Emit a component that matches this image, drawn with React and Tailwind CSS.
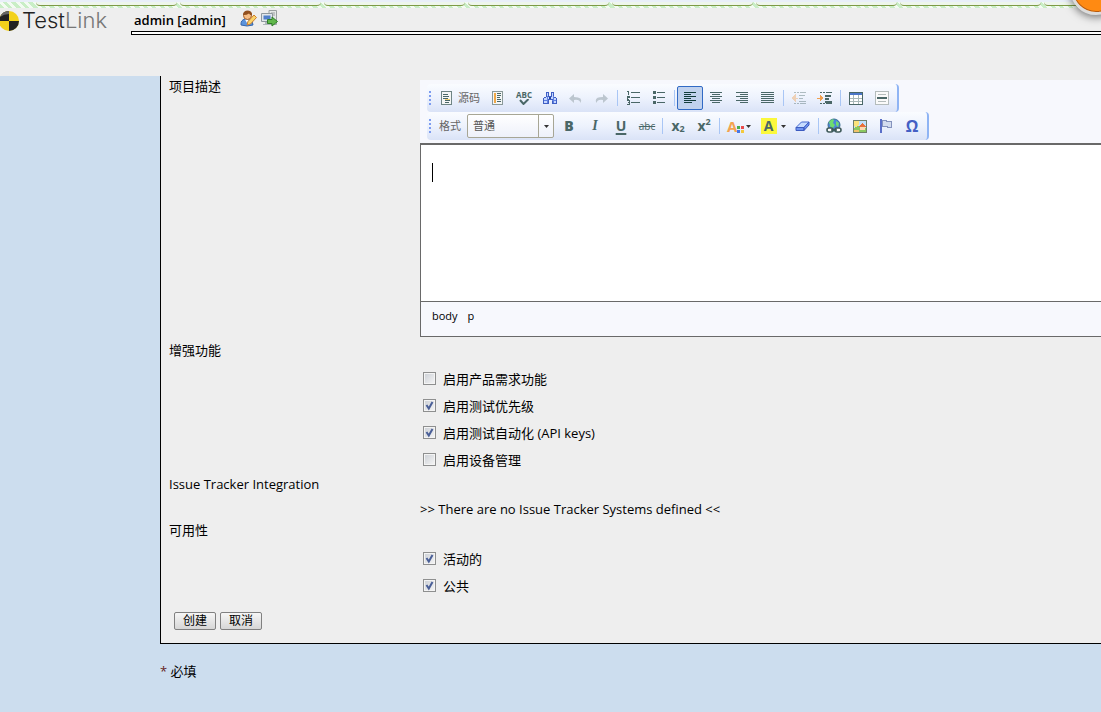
import { useState } from 'react';

const INK = '#4a6767';

const Icon = ({ children }) => (
  <svg width="16" height="16" viewBox="0 0 16 16" fill="none" shapeRendering="crispEdges" aria-hidden="true">
    {children}
  </svg>
);

// paragraph alignment icons, one [x, width] pair per line
const Lines = ({ rows, color = INK }) => (
  <Icon>
    {rows.map(([x, w], i) => (
      <rect key={i} x={x} y={2 + i * 2} width={w} height="1" fill={color} />
    ))}
  </Icon>
);

const leftRows = [[2, 12], [2, 7], [2, 12], [2, 7], [2, 12], [2, 8]];
const centerRows = [[2, 12], [4, 8], [2, 12], [4, 8], [2, 12], [4, 8]];
const rightRows = [[2, 12], [6, 8], [2, 12], [6, 8], [2, 12], [6, 8]];
const justifyRows = [[1, 13], [1, 13], [1, 13], [1, 13], [1, 13], [1, 13]];

const SourceIcon = () => (
  <Icon>
    <path d="M3.5 1.5h10v13h-10z" fill="#f4f6f6" stroke="#6f8585" />
    <path d="M5 4.5h5M5 6.5h6M5 8.5h5M7 10.5h5M7 12.5h4" stroke={INK} />
    <path d="M7 9.5h5" stroke="#f0d070" />
  </Icon>
);

const TemplateIcon = () => (
  <Icon>
    <path d="M2.5 1.500h10v13h-10z" fill="#f4f6f6" stroke="#8a9999" />
    <path d="M4.5 3v10" stroke="#f0a848" strokeWidth="2" />
    <path d="M7 3.500h4M7 5.500h4M7 7.500h3M7 9.500h4M7 11.500h4" stroke={INK} />
  </Icon>
);

const FindIcon = () => (
  <Icon>
    <path d="M4.500 2.500h2v4h3v-4h2v4l3 2v5h-4.500v-4h-4v4H1.500v-5l3-2z" fill="#c5d6ff" stroke="#3f5fc4" />
    <path d="M5 6v7M11 6v7M2 10.500h4M10 10.500h4" stroke="#5f80e0" />
    <path d="M7 7.500h2" stroke="#27459c" strokeWidth="2" />
  </Icon>
);

const UndoIcon = () => (
  <svg width="16" height="16" viewBox="0 0 16 16" aria-hidden="true">
    <path d="M6 4 1 8.500 6 13v-3q5.500-1 6.500 3 3-6-6.500-6z" fill="#bcc6cf" />
  </svg>
);

const RedoIcon = () => (
  <svg width="16" height="16" viewBox="0 0 16 16" aria-hidden="true">
    <path d="m9 4 5 4.500L9 13v-3q-5.500-1-6.500 3-3-6 6.500-6z" fill="#bcc6cf" />
  </svg>
);

const NumberedIcon = () => (
  <Icon>
    <path d="M2 1.500h1.500V5M2 6.500h2v1H2.500V9H4M2 10.500h2V12H2.500M4 12v2H2" stroke={INK} />
    <path d="M6 2.500h9M6 7.500h9M6 12.500h9" stroke={INK} />
  </Icon>
);

const BulletIcon = () => (
  <Icon>
    <path d="M2 2.500h3M2 7.500h3M2 12.500h3" stroke={INK} strokeWidth="3" />
    <path d="M6 2.500h8M6 7.500h8M6 12.500h8" stroke={INK} />
  </Icon>
);

const IndentIcon = ({ back }) => (
  <Icon>
    <g opacity={back ? 0.4 : 1}>
      <path d="M3 2.500h2M6 2.500h2M9 2.500h6M3 13.500h2M6 13.500h2M9 13.500h6" stroke={INK} />
      <path d="M8 5.500h6M8 8.500h4M8 11.500h7" stroke={INK} strokeWidth={back ? 1 : 2} />
      {back ? (
        <path d="M7 8H3M4 5 1 8l3 3z" stroke="#f0a050" fill="#f0a050" />
      ) : (
        <path d="M0 8h4M3 5l3 3-3 3z" stroke="#f0a050" fill="#f0a050" />
      )}
    </g>
  </Icon>
);

const TableIcon = () => (
  <Icon>
    <path d="M1.500 2.500h13v12h-13z" fill="#fff" />
    <path d="M2 4h12" stroke="#4b76c8" strokeWidth="2" />
    <path d="M2 8.500h12M2 11.500h12M5.500 5v9M10.500 5v9" stroke="#a9b8b8" />
    <path d="M1.500 2.500h13v12h-13z" stroke={INK} />
  </Icon>
);

const RuleIcon = () => (
  <Icon>
    <path d="M1.500 1.500h13v13h-13z" fill="#fafafa" stroke="#b4bcbc" />
    <path d="M4 4.500h8M4 11.500h8" stroke="#b4bcbc" />
    <path d="M3 8h10" stroke={INK} strokeWidth="2" />
  </Icon>
);

const TextColorIcon = () => (
  <span className="relative h-4 w-[18px] text-left text-[15px] leading-4 text-[#f4a350]">
    A
    <svg width="8" height="8" viewBox="0 0 8 8" className="absolute right-0 bottom-0" aria-hidden="true">
      <path d="M0 0h3v3H0z" fill="#4cae4c" />
      <path d="M4 0h3v3H4z" fill="#e94b4b" />
      <path d="M0 4h3v3H0z" fill="#4678e8" />
      <path d="M4 4h3v3H4z" fill="#f3c93c" />
    </svg>
  </span>
);

const EraserIcon = () => (
  <svg width="16" height="16" viewBox="0 0 16 16" aria-hidden="true">
    <path d="M6.500 4h7.500l-5 5.500h-8z" fill="#c7dcff" stroke="#4668cf" />
    <path d="M1 9.500h8v3H1zM9 9.500l5-5.500v3l-5 5.500z" fill="#6f94ef" stroke="#3c5bc0" />
  </svg>
);

const LinkIcon = () => (
  <svg width="16" height="16" viewBox="0 0 16 16" fill="none" aria-hidden="true">
    <circle cx="8" cy="7" r="6" fill="#4b86dc" stroke="#3b6f8f" />
    <path d="M3 4q3-4 5-2L7 5l2 2-2 3q-3 0-3-3zM10 3l3 2-1 4-2-2z" fill="#6fdc70" />
    <rect x="1" y="10" width="6" height="4" rx="2" fill="#fff" stroke="#3f5a5a" strokeWidth="1.600" />
    <rect x="9" y="10" width="6" height="4" rx="2" fill="#fff" stroke="#3f5a5a" strokeWidth="1.600" />
    <path d="M5 12h6" stroke="#3f5a5a" strokeWidth="1.600" />
  </svg>
);

const ImageIcon = () => (
  <Icon>
    <path d="M1.500 2.500h13v12h-13z" fill="#bfe0fb" stroke="#6f7f6a" />
    <path d="M2 3h5v4l-3 2-2-1z" fill="#fbe27a" />
    <path d="M2 10l4-2 8 2v4H2z" fill="#8ac860" />
    <path d="m7 8 3-3 4 3v1H7z" fill="#e8703a" />
    <path d="M8 9h5v3H8z" fill="#fbd9b0" />
    <path d="M2 12h5v2H2z" fill="#f0c36a" />
  </Icon>
);

const FlagIcon = () => (
  <Icon>
    <path d="M4 2.500h4v1h5.500v6H9v-1H4z" fill="#d3dcee" stroke="#8593bd" />
    <path d="M3 1v14" stroke="#5a6fc8" strokeWidth="2" />
  </Icon>
);

const Arrow = () => (
  <svg width="5" height="3" viewBox="0 0 5 3" className="shrink-0" aria-hidden="true">
    <path d="M0 0h5L2.500 3z" fill="#333" />
  </svg>
);

const Grip = () => (
  <svg width="6" height="16" viewBox="0 0 6 16" className="shrink-0" aria-hidden="true">
    {[1, 5, 9, 13].map((y) => (
      <rect key={y} x="2" y={y} width="2" height="2" fill="#7d9cf0" />
    ))}
  </svg>
);

const Separator = () => (
  <span className="flex h-4 w-[5px] shrink-0 justify-center">
    <span className="w-px bg-[#a9c6f5]" />
  </span>
);

const ToolButton = ({ label, active, className = 'w-[26px]', children }) => (
  <button
    type="button"
    aria-label={label}
    className={`flex h-6 shrink-0 items-center justify-center text-[14px] leading-4 font-bold text-[#4a6767] ${className} ${
      active ? 'rounded-[2px] border border-[#316ac5] bg-[#c1d2ee]' : ''
    }`}
  >
    {children}
  </button>
);

const ToolbarRow = ({ children }) => (
  <div className="flex h-7 w-fit items-center rounded-[4px] border-r-2 border-[#8fb4f4] bg-linear-to-b from-[#fafcff] via-[#edf2fd] to-[#dae3f7] pr-[2px]">
    <Grip />
    {children}
  </div>
);

const Editor = () => (
  <div className="mt-1 border-b border-[#696969] bg-[#f7f8fd]">
    <div className="pt-1 pb-[3px] pl-[7px]">
      <ToolbarRow>
        <ToolButton label="源码" className="w-[52px] gap-1">
          <SourceIcon />
          <span className="text-[11px] font-normal text-[#666]">源码</span>
        </ToolButton>
        <ToolButton label="模板"><TemplateIcon /></ToolButton>
        <ToolButton label="拼写检查">
          <span className="flex flex-col items-center text-[8px] leading-[8px]">
            ABC
            <svg width="11" height="6" viewBox="0 0 11 6" fill="none" aria-hidden="true">
              <path d="m1 1 3.500 4L9.500 0" stroke={INK} strokeWidth="2" />
            </svg>
          </span>
        </ToolButton>
        <ToolButton label="查找"><FindIcon /></ToolButton>
        <ToolButton label="撤消"><UndoIcon /></ToolButton>
        <ToolButton label="重做"><RedoIcon /></ToolButton>
        <Separator />
        <ToolButton label="编号列表"><NumberedIcon /></ToolButton>
        <ToolButton label="项目列表"><BulletIcon /></ToolButton>
        <Separator />
        <ToolButton label="左对齐" active><Lines rows={leftRows} color="#123c3c" /></ToolButton>
        <ToolButton label="居中"><Lines rows={centerRows} /></ToolButton>
        <ToolButton label="右对齐"><Lines rows={rightRows} /></ToolButton>
        <ToolButton label="两端对齐"><Lines rows={justifyRows} /></ToolButton>
        <Separator />
        <ToolButton label="减少缩进"><IndentIcon back /></ToolButton>
        <ToolButton label="增加缩进"><IndentIcon /></ToolButton>
        <Separator />
        <ToolButton label="表格"><TableIcon /></ToolButton>
        <ToolButton label="水平线"><RuleIcon /></ToolButton>
      </ToolbarRow>
      <ToolbarRow>
        <label htmlFor="format" className="shrink-0 px-[6px] text-[11px] text-[#666]">格式</label>
        <div className="relative mr-[2px] h-6 w-[87px] shrink-0">
          <select
            id="format"
            className="h-6 w-full appearance-none rounded-[2px] border border-[#a7a695] bg-linear-to-b from-white to-[#eef1fa] pb-1 pl-[5px] text-[11px] text-[#555]"
          >
            <option>普通</option>
          </select>
          <span className="pointer-events-none absolute inset-y-0 right-0 flex w-4 items-center justify-center border-l border-[#a7a695]">
            <Arrow />
          </span>
        </div>
        <ToolButton label="加粗"><span className="font-black">B</span></ToolButton>
        <ToolButton label="倾斜"><i className="font-['Liberation_Serif',serif]">I</i></ToolButton>
        <ToolButton label="下划线"><u className="decoration-2 underline-offset-2">U</u></ToolButton>
        <ToolButton label="删除线"><s className="text-[10px] font-normal">abc</s></ToolButton>
        <Separator />
        <ToolButton label="下标">x<span className="mt-[6px] text-[9px]">2</span></ToolButton>
        <ToolButton label="上标">x<span className="mb-[8px] text-[9px]">2</span></ToolButton>
        <Separator />
        <ToolButton label="文本颜色" className="w-[34px] gap-px"><TextColorIcon /><Arrow /></ToolButton>
        <ToolButton label="背景颜色" className="w-[34px] gap-1">
          <span className="h-4 w-4 bg-[#fbf83c] text-center">A</span>
          <Arrow />
        </ToolButton>
        <ToolButton label="清除格式"><EraserIcon /></ToolButton>
        <Separator />
        <ToolButton label="超链接"><LinkIcon /></ToolButton>
        <ToolButton label="图像"><ImageIcon /></ToolButton>
        <ToolButton label="锚点"><FlagIcon /></ToolButton>
        <ToolButton label="特殊符号"><span className="text-[16px] text-[#4460c4]">Ω</span></ToolButton>
      </ToolbarRow>
    </div>
    <div className="border-t-2 border-l border-[#696969]">
      <div
        role="textbox"
        aria-label="项目描述"
        contentEditable
        suppressContentEditableWarning
        className="h-[156px] bg-white px-[11px] py-[18px] outline-none"
      >
        <span className="block h-[19px] w-px bg-black" />
      </div>
      <div className="flex h-[35px] gap-[10px] border-t border-[#696969] px-[11px] pt-[6px] text-[11px] leading-4">
        <a href="#body">body</a>
        <a href="#p">p</a>
      </div>
    </div>
  </div>
);

const CheckRow = ({ id, label, defaultChecked = false }) => {
  const [checked, setChecked] = useState(defaultChecked);

  return (
    <div className="flex h-[27px] items-center gap-[7px] pb-[2px] pl-[3px]">
      <span className="relative h-[13px] w-[13px]">
        <input
          id={id}
          type="checkbox"
          checked={checked}
          onChange={(e) => setChecked(e.target.checked)}
          className="block h-[13px] w-[13px] appearance-none border border-[#8e8f8f] bg-linear-to-br from-[#cbcfd5] to-[#f6f6f6] shadow-[inset_0_0_0_1px_#f4f4f4]"
        />
        {checked && (
          <svg viewBox="0 0 13 13" className="pointer-events-none absolute inset-0 h-[13px] w-[13px]" fill="none" aria-hidden="true">
            <path d="m3.500 6 2.300 3.500L9.500 3" stroke="#4a5f97" strokeWidth="2" />
          </svg>
        )}
      </span>
      <label htmlFor={id}>{label}</label>
    </div>
  );
};

const FormRow = ({ label, children }) => (
  <div className="grid grid-cols-[251px_1fr]">
    <div className="h-[22px] leading-5">{label}</div>
    <div className="min-w-0">{children}</div>
  </div>
);

const tabs = [1, 2, 3, 4, 5, 6, 7, 8];

const Header = () => (
  <header className="h-[76px] bg-[#eee]">
    <div className="relative h-2">
      <div className="flex h-2 gap-[3px] overflow-hidden border-t-2 border-[#e9eff9] bg-[repeating-linear-gradient(45deg,#c9eec6_0_3px,#f3fbf2_3px_6px)] pl-9">
        {tabs.map((t) => (
          <div key={t} className="h-1 w-[141px] shrink-0 rounded-b-[4px] border-b border-[#7d9a45] bg-[#eef6ec]" />
        ))}
      </div>
      <div className="absolute -top-[37px] -right-[21px] h-[52px] w-[52px] rounded-full border-3 border-[#dcdcdc] bg-[#ff8a12] shadow-[0_2px_8px_#0008,inset_0_0_0_1px_#b55a10]" />
    </div>
    <div className="flex">
      <div className="flex h-6 w-[131px] shrink-0 items-center gap-[2px]">
        <svg width="20" height="22" viewBox="0 0 20 22" aria-hidden="true">
          <circle cx="9" cy="12" r="10" fill="#f3d21b" />
          <path d="M9 12V2A10 10 0 0 0 0 8v4zM9 12v10a10 10 0 0 0 10-10z" fill="#222" />
          <path d="M0 8a10 10 0 0 1 9-6v3Q4 5 0 8z" fill="#666" />
        </svg>
        <span className="font-['Inter',sans-serif] text-[22px] leading-6 font-light text-[#222]">
          Test<span className="text-[#777]">Link</span>
        </span>
      </div>
      <div className="flex-1">
        <div className="flex h-[23px] items-center pl-[3px]">
          <span className="font-semibold">admin [admin]</span>
          <div className="ml-[14px] flex gap-1 pb-[2px]">
            <a href="#profile" aria-label="个人帐号">
              <svg width="17" height="17" viewBox="0 0 17 17" aria-hidden="true">
                <path d="M1 15q-.5-5 4-6h4q4 1 4 6-6 2-12 0z" fill="#5b93dc" stroke="#3567ad" />
                <path d="M5 9.500h4L7 13z" fill="#fff" />
                <circle cx="7.500" cy="5.500" r="4" fill="#f6bd85" stroke="#a3602c" />
                <path d="M3 5q0-4.500 5-4.500 4.500.5 4 5-2 0-3-2Q6 5.500 3 5z" fill="#92501f" />
                <path d="m7 15 1-3.500L14 5l2.500 2.500-6 6.500z" fill="#fad36a" stroke="#d0802e" />
              </svg>
            </a>
            <a href="#logout" aria-label="退出">
              <svg width="17" height="17" viewBox="0 0 17 17" aria-hidden="true">
                <path d="M8 .5h7.500v14H8z" fill="#e5e8e8" stroke="#9aa0a0" />
                <path d="M10 3h4M10 5h4" stroke="#9aa0a0" />
                <path d="M.5 3.500h11v8H.5z" fill="#e0e6ea" stroke="#8e989e" />
                <path d="M2.500 5.500h7v4h-7z" fill="#4f7fcb" />
                <path d="M4 12h4v2h2v1H2v-1h2z" fill="#b0b7bb" />
                <path d="M6.500 9.500H11V7l5.500 4.500L11 16v-2.500H6.500z" fill="#62b84b" stroke="#2f7f28" />
              </svg>
            </a>
          </div>
        </div>
        <div className="h-1 border-y border-l border-black bg-white" />
      </div>
    </div>
  </header>
);

const SubmitButton = ({ children }) => (
  <button
    type="button"
    className="h-[18px] w-[42px] rounded-[2px] border border-[#808080] bg-linear-to-b from-[#f6f6f6] to-[#d6d6d6] text-[12px] leading-4"
  >
    {children}
  </button>
);

const App = () => {
  return (
    <div className="min-h-screen overflow-hidden bg-[#cde] font-['Open_Sans','Noto_Sans_CJK_SC',sans-serif] text-[13px] leading-[22px] text-black">
      <Header />
      <form className="ml-40 border-b border-l border-black bg-[#eee] pb-[13px] pl-2">
        <FormRow label="项目描述">
          <Editor />
        </FormRow>
        <div className="mt-[3px]">
          <FormRow label="增强功能" />
        </div>
        <div className="mt-1">
          <FormRow>
            <CheckRow id="requirements" label="启用产品需求功能" />
            <CheckRow id="priority" label="启用测试优先级" defaultChecked />
            <CheckRow id="automation" label="启用测试自动化 (API keys)" defaultChecked />
            <CheckRow id="inventory" label="启用设备管理" />
          </FormRow>
        </div>
        <FormRow label="Issue Tracker Integration" />
        <FormRow>
          <p className="pt-[2px]">&gt;&gt; There are no Issue Tracker Systems defined &lt;&lt;</p>
        </FormRow>
        <FormRow label="可用性" />
        <div className="mt-1">
          <FormRow>
            <CheckRow id="active" label="活动的" defaultChecked />
            <CheckRow id="public" label="公共" defaultChecked />
          </FormRow>
        </div>
        <div className="mt-3 flex gap-1 pl-[5px]">
          <SubmitButton>创建</SubmitButton>
          <SubmitButton>取消</SubmitButton>
        </div>
      </form>
      <p className="mt-4 ml-40"><span className="text-[#622]">*</span> 必填</p>
    </div>
  );
};

export default App;
